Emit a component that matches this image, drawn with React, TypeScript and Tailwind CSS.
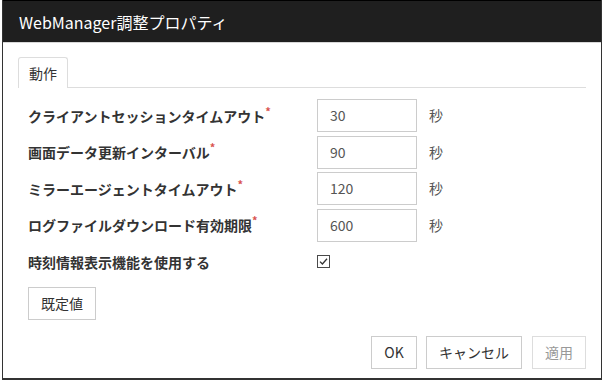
import React from 'react';

const rows = [
  { label: 'クライアントセッションタイムアウト', value: '30' },
  { label: '画面データ更新インターバル', value: '90' },
  { label: 'ミラーエージェントタイムアウト', value: '120' },
  { label: 'ログファイルダウンロード有効期限', value: '600' },
];

function CheckBox() {
  return (
    <svg width="13" height="13" viewBox="0 0 13 13">
      <rect x="0.5" y="0.5" width="12" height="12" fill="#fff" stroke="#4a4a4a" />
      <path d="M3 6.6 L5.4 9 L10 3.8" fill="none" stroke="#333" strokeWidth="1.3" />
    </svg>
  );
}

export default function App() {
  return (
    <div className="w-[604px] h-[382px] bg-white font-['Noto_Sans_CJK_JP','Noto_Sans',sans-serif] text-[#333]">
      <div className="ml-[2px] w-[600px] h-[380px] flex flex-col border-x border-b-2 border-[#333] bg-white">
        <div className="h-[43px] shrink-0 flex items-center px-[16px] bg-[#1f1f1f] border-t border-black border-b border-b-[#d8d8d8] text-white text-[16px]">
          WebManager調整プロパティ
        </div>

        <div className="flex-1 flex flex-col px-[15px] pt-[14px]">
          <div className="flex border-b border-[#ddd] h-[31px]">
            <div className="w-[50px] h-[31px] flex items-center justify-center border border-b-0 border-[#ddd] rounded-t-[3px] bg-white text-[14px] -mb-px">
              動作
            </div>
          </div>

          <div className="flex flex-col gap-[3.5px] px-[10px] pt-[11px]">
            {rows.map((r) => (
              <div key={r.label} className="flex items-center h-[33px]">
                <div className="w-[289px] text-[14px] font-bold leading-none">
                  {r.label}
                  <span className="text-[#d9534f] text-[11px] align-top relative -top-[3px]">*</span>
                </div>
                <div className="w-[100px] h-[33px] flex items-center px-[12px] border border-[#ccc] text-[14px] text-[#555]">
                  {r.value}
                </div>
                <div className="ml-[12px] text-[14px] text-[#555]">秒</div>
              </div>
            ))}
            <div className="flex items-center h-[33px]">
              <div className="w-[289px] text-[14px] font-bold leading-none">時刻情報表示機能を使用する</div>
              <CheckBox />
            </div>
          </div>

          <div className="px-[10px] pt-[9px]">
            <button className="w-[68px] h-[33px] border border-[#ccc] bg-white text-[14px] text-[#333]">既定値</button>
          </div>

          <div className="flex justify-end gap-[9px] pt-[16px]">
            <button className="w-[46px] h-[33px] border border-[#ccc] bg-white text-[14px] text-[#333]">OK</button>
            <button className="w-[96px] h-[33px] border border-[#ccc] bg-white text-[14px] text-[#333]">キャンセル</button>
            <button className="w-[54px] h-[33px] ml-px border border-[#ddd] bg-white text-[14px] text-[#999]">適用</button>
          </div>
        </div>
      </div>
    </div>
  );
}
